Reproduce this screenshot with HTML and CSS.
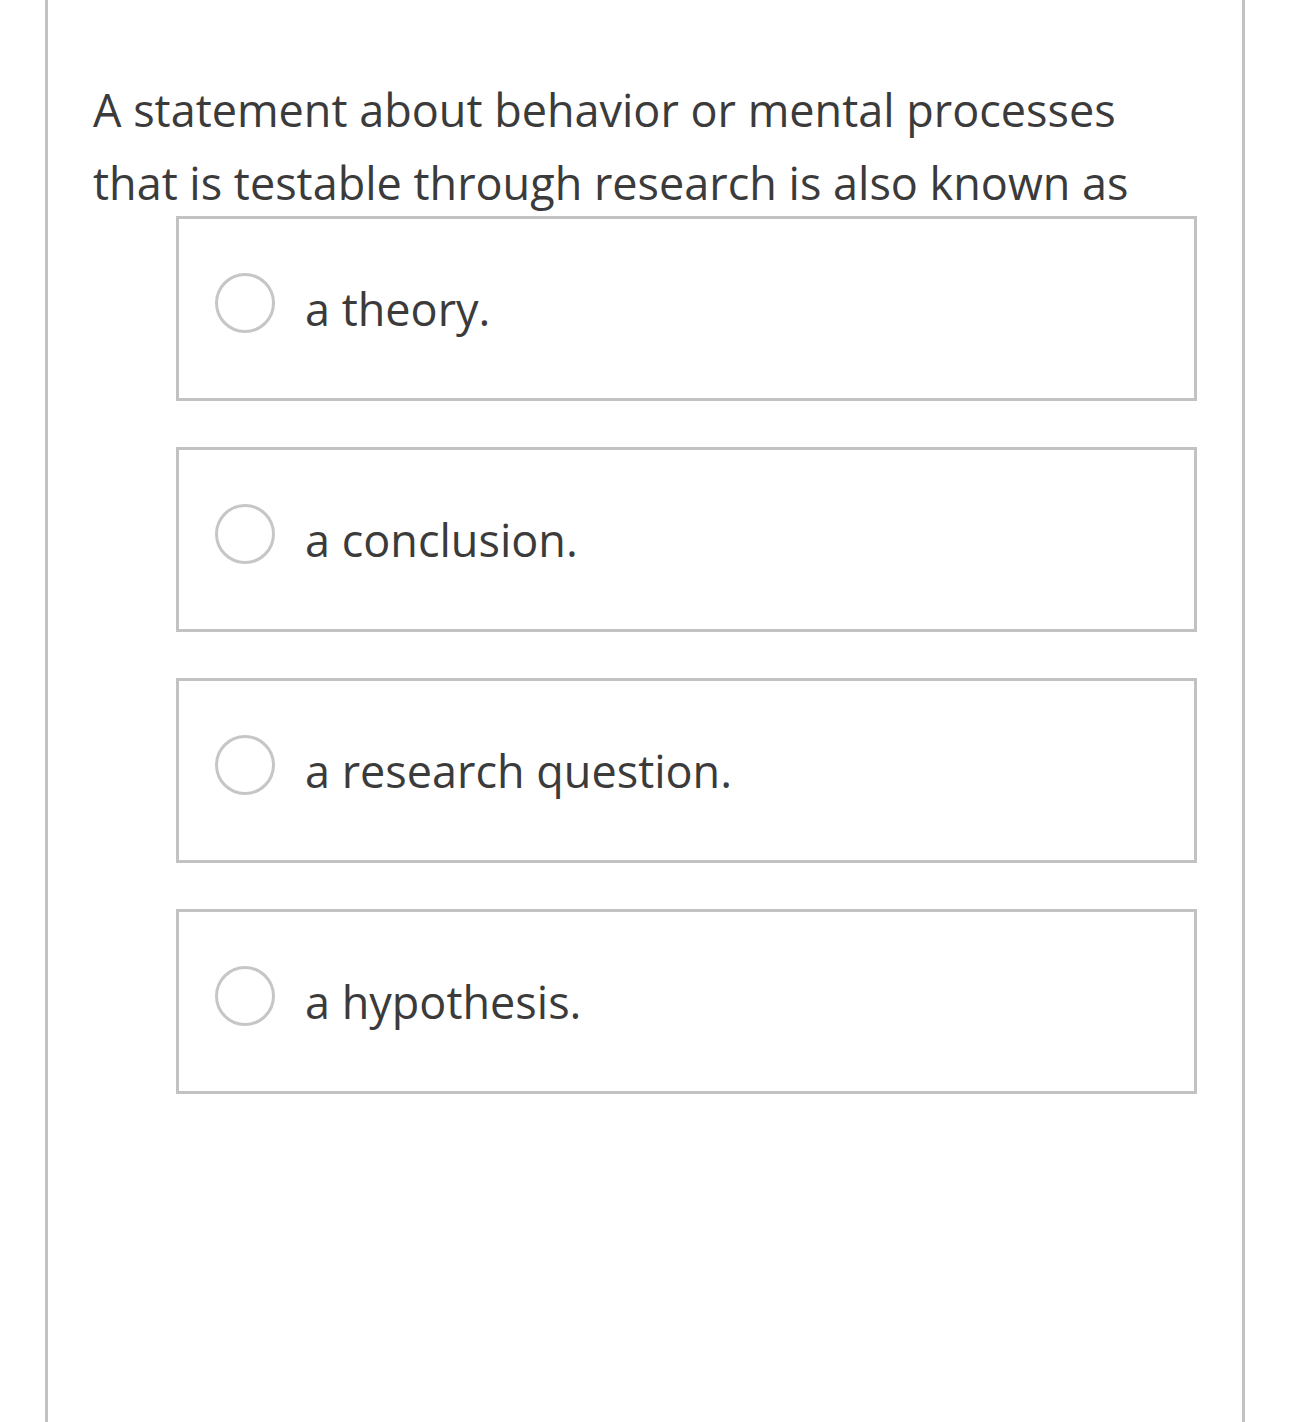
FILE: index.html
```html
<!DOCTYPE html>
<html lang="en">
<head>
<meta charset="utf-8">
<title>Question</title>
<link rel="stylesheet" href="styles.css">
</head>
<body>
<div class="panel">
  <p class="question">A statement about behavior or mental processes that is testable through research is also known as</p>
  <div class="options">
    <label class="option"><span class="radio"></span><span class="label">a theory.</span></label>
    <label class="option"><span class="radio"></span><span class="label">a conclusion.</span></label>
    <label class="option"><span class="radio"></span><span class="label">a research question.</span></label>
    <label class="option"><span class="radio"></span><span class="label">a hypothesis.</span></label>
  </div>
</div>
</body>
</html>
```
FILE: styles.css
```css
html, body {
  margin: 0;
  padding: 0;
  background: #ffffff;
}
body {
  font-family: "Open Sans", "Noto Sans", sans-serif;
  color: #3b3b3b;
}
.panel {
  box-sizing: border-box;
  margin-left: 45px;
  width: 1200px;
  min-height: 1422px;
  border-left: 3px solid #c2c2c2;
  border-right: 3px solid #c2c2c2;
  padding: 73px 45px 0 45px;
}
.question {
  margin: 0;
  font-size: 45px;
  line-height: 73px;
  width: 1080px;
}
.options {
  margin: -3px 0 0 83px;
  display: flex;
  flex-direction: column;
  gap: 46px;
}
.option {
  box-sizing: border-box;
  height: 185px;
  border: 3px solid #c2c2c2;
  display: flex;
  align-items: flex-start;
  padding: 54px 0 0 36px;
}
.radio {
  box-sizing: border-box;
  width: 60px;
  height: 60px;
  border-radius: 50%;
  border: 3px solid #c6c6c6;
  flex: none;
}
.label {
  margin-left: 30px;
  font-size: 45px;
  line-height: 60px;
  margin-top: 6px;
}
```
